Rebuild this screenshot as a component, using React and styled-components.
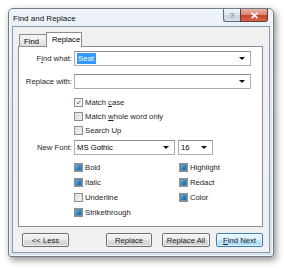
import React from "react";
import styled, { createGlobalStyle, css } from "styled-components";

const Global = createGlobalStyle`
  html, body { margin: 0; padding: 0; background: #ffffff; }
  body { font-family: "Liberation Sans", Arial, sans-serif; font-size: 7.7px; color: #000; }
  * { box-sizing: border-box; }
`;

const Page = styled.div`
  padding: 8px 0 0 8px;
  width: 284px;
  height: 269px;
`;

const Window = styled.div`
  width: 266px;
  height: 249px;
  display: flex;
  flex-direction: column;
  border: 1px solid #6d7a8a;
  border-radius: 5px 5px 3px 3px;
  background: linear-gradient(180deg, #eef3f9 0%, #dde7f3 40%, #d6e2f0 100%);
  box-shadow: 2px 3px 7px rgba(0, 0, 0, 0.45), inset 0 0 0 1px rgba(255,255,255,0.7);
`;

const TitleBar = styled.div`
  height: 18px;
  display: flex;
  align-items: flex-start;
  justify-content: space-between;
  padding-left: 4px;
  padding-right: 5px;
`;

const Title = styled.div`
  padding-top: 5px;
  font-size: 8px;
  color: #111;
`;

const Captions = styled.div`
  display: flex;
`;

const CaptionBtn = styled.div`
  height: 13px;
  display: flex;
  align-items: center;
  justify-content: center;
  border: 1px solid #5d6b7c;
  border-top: none;
  font-size: 8px;
  ${(p) =>
    p.$close
      ? css`
          width: 28px;
          border-color: #6b3a33;
          border-radius: 0 0 3px 0;
          background: linear-gradient(180deg, #eab3a6 0%, #d98b78 45%, #c5442c 55%, #d4664a 100%);
          color: #fff;
        `
      : css`
          width: 17px;
          border-right: none;
          border-radius: 0 0 0 3px;
          background: linear-gradient(180deg, #f3f6fa 0%, #dfe6ef 45%, #c9d3df 55%, #d8e1ec 100%);
          color: #5a6778;
        `}
`;

const Client = styled.div`
  flex: 1;
  margin: 0 3px 3px 3px;
  border: 1px solid #8d99a8;
  background: #f0f0f0;
  padding: 5px 6px 5px 5px;
  display: flex;
  flex-direction: column;
`;

const TabStrip = styled.div`
  height: 14px;
  display: flex;
  align-items: flex-end;
  padding-left: 1px;
  position: relative;
  z-index: 1;
`;

const Tab = styled.div`
  width: ${(p) => p.$w}px;
  border: 1px solid #898c95;
  border-bottom: none;
  display: flex;
  align-items: center;
  ${(p) =>
    p.$active
      ? css`
          height: 15px;
          margin-bottom: -1px;
          background: #fff;
          padding: 0 0 1px 5px;
        `
      : css`
          height: 12px;
          border-right: none;
          background: linear-gradient(180deg, #f6f6f6 0%, #ececec 50%, #dddddd 100%);
          padding: 1px 0 0 4px;
        `}
`;

const Panel = styled.div`
  height: 181px;
  border: 1px solid #898c95;
  background: #fff;
  padding: 4px 10px 0 0;
  display: flex;
  flex-direction: column;
`;

const FieldRow = styled.div`
  display: flex;
  align-items: center;
  height: 15px;
  margin-bottom: ${(p) => p.$mb || 0}px;
`;

const Label = styled.div`
  width: 53px;
  margin-right: 2px;
  text-align: right;
  white-space: nowrap;
  color: #1e1e1e;
`;

const U = styled.span`
  text-decoration: underline;
`;

const Combo = styled.div`
  width: ${(p) => p.$w}px;
  height: 15px;
  margin-right: ${(p) => p.$mr || 0}px;
  border: 1px solid #abadb3;
  border-top-color: #8e9095;
  background: #fff;
  display: flex;
  align-items: center;
  padding: 0 5px 0 2px;
`;

const ComboText = styled.div`
  flex: 1;
  white-space: nowrap;
`;

const Selected = styled.span`
  background: #3399ff;
  color: #fff;
  padding: 1px 2px 1px 1px;
`;

const Arrow = styled.div`
  width: 0;
  height: 0;
  border-left: 3px solid transparent;
  border-right: 3px solid transparent;
  border-top: 3px solid #111;
`;

const CheckList = styled.div`
  display: flex;
  flex-direction: column;
  padding-left: 55px;
  margin-bottom: ${(p) => p.$mb || 0}px;
`;

const CheckGrid = styled.div`
  display: grid;
  grid-template-columns: 105px auto;
  grid-auto-rows: 15px;
  padding-left: 55px;
`;

const CheckRow = styled.div`
  height: ${(p) => p.$h || 14}px;
  display: flex;
  align-items: center;
  white-space: nowrap;
  color: #1e1e1e;
`;

const Box = styled.div`
  width: 9px;
  height: 9px;
  margin-right: 2px;
  border: 1px solid #8f8f8f;
  background: #f4f4f4;
  padding: 1px;
  display: flex;
  align-items: center;
  justify-content: center;
`;

const BoxInner = styled.div`
  width: 5px;
  height: 5px;
  ${(p) =>
    p.$fill
      ? css`
          background: linear-gradient(135deg, #5fb8e6 0%, #2a86bd 50%, #1b5f94 100%);
          outline: 1px solid #6a8fae;
        `
      : css`
          background: linear-gradient(135deg, #dcdcdc 0%, #f2f2f2 100%);
          outline: 1px solid #e6e6e6;
        `}
`;

const Check = ({ state, children }) => (
  <>
    <Box>
      {state === "checked" ? (
        <svg width="7" height="7" viewBox="0 0 7 7">
          <path d="M1 3.6 L2.8 5.6 L6 0.8" fill="none" stroke="#4a5f97" strokeWidth="1.2" />
        </svg>
      ) : (
        <BoxInner $fill={state === "fill"} />
      )}
    </Box>
    <span>{children}</span>
  </>
);

const ButtonRow = styled.div`
  margin-top: 6px;
  height: 14px;
  display: flex;
  padding-left: 4px;
`;

const Button = styled.div`
  width: ${(p) => p.$w}px;
  height: 14px;
  margin-left: ${(p) => p.$ml || 0}px;
  display: flex;
  align-items: center;
  justify-content: center;
  border: 1px solid ${(p) => (p.$default ? "#3c7fb1" : "#707070")};
  border-radius: 2px;
  color: #1a1a1a;
  background: ${(p) =>
    p.$default
      ? "linear-gradient(180deg, #eaf6fd 0%, #d9f0fc 50%, #bee6fd 51%, #a7d9f5 100%)"
      : "linear-gradient(180deg, #f2f2f2 0%, #ebebeb 50%, #dddddd 51%, #cfcfcf 100%)"};
  box-shadow: inset 0 0 0 1px rgba(255,255,255,0.65);
`;

export default function App() {
  return (
    <>
      <Global />
      <Page>
        <Window>
          <TitleBar>
            <Title>Find and Replace</Title>
            <Captions>
              <CaptionBtn>?</CaptionBtn>
              <CaptionBtn $close>
                <svg width="9" height="7" viewBox="0 0 9 7">
                  <path d="M1.5 0.8 L7.5 6.2 M7.5 0.8 L1.5 6.2" stroke="#fff" strokeWidth="1.6" />
                </svg>
              </CaptionBtn>
            </Captions>
          </TitleBar>
          <Client>
            <TabStrip>
              <Tab $w={27}>Find</Tab>
              <Tab $w={36} $active>Replace</Tab>
            </TabStrip>
            <Panel>
              <FieldRow $mb={8}>
                <Label>
                  F<U>i</U>nd what:
                </Label>
                <Combo $w={177}>
                  <ComboText>
                    <Selected>Seat</Selected>
                  </ComboText>
                  <Arrow />
                </Combo>
              </FieldRow>
              <FieldRow $mb={6}>
                <Label>Replace with:</Label>
                <Combo $w={177}>
                  <ComboText />
                  <Arrow />
                </Combo>
              </FieldRow>
              <CheckList $mb={3}>
                <CheckRow>
                  <Check state="checked">
                    Match <U>c</U>ase
                  </Check>
                </CheckRow>
                <CheckRow>
                  <Check state="off">
                    Match <U>w</U>hole word only
                  </Check>
                </CheckRow>
                <CheckRow>
                  <Check state="off">Search Up</Check>
                </CheckRow>
              </CheckList>
              <FieldRow $mb={5}>
                <Label>New Font:</Label>
                <Combo $w={101} $mr={3}>
                  <ComboText>MS Gothic</ComboText>
                  <Arrow />
                </Combo>
                <Combo $w={35}>
                  <ComboText>16</ComboText>
                  <Arrow />
                </Combo>
              </FieldRow>
              <CheckGrid>
                <CheckRow $h={15}>
                  <Check state="fill">Bold</Check>
                </CheckRow>
                <CheckRow $h={15}>
                  <Check state="fill">Highlight</Check>
                </CheckRow>
                <CheckRow $h={15}>
                  <Check state="fill">Italic</Check>
                </CheckRow>
                <CheckRow $h={15}>
                  <Check state="fill">Redact</Check>
                </CheckRow>
                <CheckRow $h={15}>
                  <Check state="off">Underline</Check>
                </CheckRow>
                <CheckRow $h={15}>
                  <Check state="fill">Color</Check>
                </CheckRow>
                <CheckRow $h={15}>
                  <Check state="fill">Strikethrough</Check>
                </CheckRow>
              </CheckGrid>
            </Panel>
            <ButtonRow>
              <Button $w={48}>&lt;&lt; Less</Button>
              <Button $w={47} $ml={37}>
                Replace
              </Button>
              <Button $w={49} $ml={10}>
                Replace All
              </Button>
              <Button $w={48} $ml={6} $default>
                <span>
                  <U>F</U>ind Next
                </span>
              </Button>
            </ButtonRow>
          </Client>
        </Window>
      </Page>
    </>
  );
}
